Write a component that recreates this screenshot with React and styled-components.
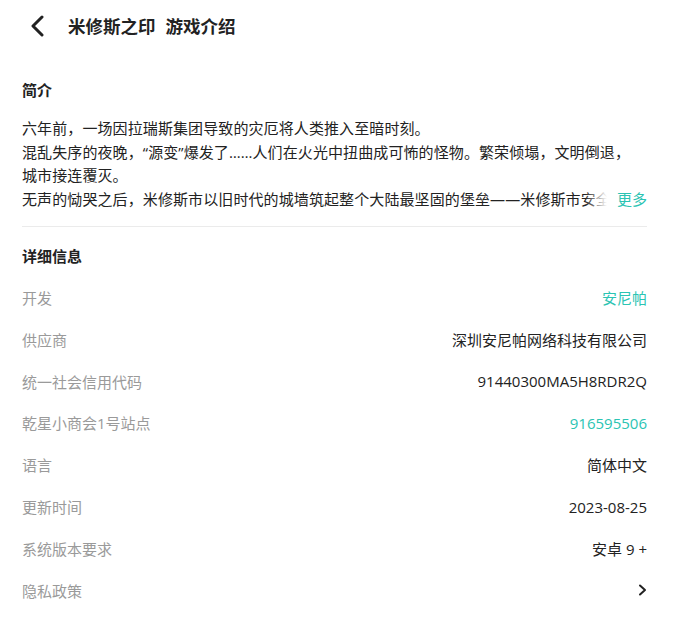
import React from "react";
import styled, { createGlobalStyle } from "styled-components";

const Global = createGlobalStyle`
  html, body { margin: 0; padding: 0; background: #fff; }
  body {
    font-family: "Open Sans", "Noto Sans CJK SC", sans-serif;
    color: #222;
    -webkit-font-smoothing: antialiased;
  }
  * { box-sizing: border-box; }
`;

const Page = styled.div`
  width: 681px;
  min-height: 621px;
  background: #fff;
`;

const Header = styled.header`
  height: 52px;
  display: flex;
  align-items: center;
  padding-left: 27px;
`;

const BackButton = styled.button`
  width: 20px;
  height: 24px;
  padding: 0;
  border: 0;
  background: none;
  display: flex;
  align-items: center;
  justify-content: center;
  margin-right: 21px;
  cursor: pointer;
`;

const Title = styled.h1`
  margin: 0 0 1px;
  display: flex;
  gap: 10px;
  font-size: 17.5px;
  font-weight: 700;
  color: #222;
  line-height: 24px;
`;

const Content = styled.main`
  padding: 0 34px 0 22px;
`;

const SectionTitle = styled.h2`
  margin: ${(p) => p.$mt} 0 0;
  font-size: 15px;
  line-height: 24px;
  font-weight: 700;
  color: #222;
`;

const IntroWrap = styled.div`
  position: relative;
  margin-top: 15px;
  max-height: calc(23.6px * 4);
  overflow: hidden;
`;

const IntroText = styled.p`
  margin: 0;
  font-size: 15px;
  line-height: 23.6px;
  color: #222;
  white-space: pre-line;
  letter-spacing: 0.1px;
`;

const MoreButton = styled.button`
  position: absolute;
  right: 0;
  top: calc(23.6px * 3);
  height: 23.6px;
  padding: 0 0 0 32px;
  border: 0;
  font: inherit;
  font-size: 15px;
  line-height: 23.6px;
  color: #2bc4b3;
  background: linear-gradient(90deg, rgba(255, 255, 255, 0) 0, #fff 22px);
  cursor: pointer;
`;

const Divider = styled.hr`
  margin: 15px 0 0;
  border: 0;
  height: 1px;
  background: #ebebeb;
`;

const InfoList = styled.dl`
  margin: 8px 0 0;
  padding: 0;
`;

const Row = styled.div`
  height: 41.85px;
  display: flex;
  align-items: center;
  justify-content: space-between;
  font-size: 15px;
`;

const Label = styled.dt`
  color: #9a9a9a;
`;

const Value = styled.dd`
  margin: 0;
  color: ${(p) => (p.$link ? "#2bc4b3" : "#222")};
  display: flex;
  align-items: center;
`;

const Chevron = ({ d, w, h, sw }) => (
  <svg width={w} height={h} viewBox={`0 0 ${w} ${h}`} fill="none">
    <path d={d} stroke="#222" strokeWidth={sw} strokeLinecap="round" strokeLinejoin="round" />
  </svg>
);

const intro =
  "六年前，一场因拉瑞斯集团导致的灾厄将人类推入至暗时刻。\n" +
  "混乱失序的夜晚，“源变”爆发了……人们在火光中扭曲成可怖的怪物。繁荣倾塌，文明倒退，\n城市接连覆灭。\n" +
  "无声的恸哭之后，米修斯市以旧时代的城墙筑起整个大陆最坚固的堡垒——米修斯市安全区，成为人类最后的希望。\n" +
  "而你，将作为指挥官，带领伙伴们守护这座城市。";

const rows = [
  { label: "开发", value: "安尼帕", link: true },
  { label: "供应商", value: "深圳安尼帕网络科技有限公司" },
  { label: "统一社会信用代码", value: "91440300MA5H8RDR2Q" },
  { label: "乾星小商会1号站点", value: "916595506", link: true },
  { label: "语言", value: "简体中文" },
  { label: "更新时间", value: "2023-08-25" },
  { label: "系统版本要求", value: "安卓 9 +" },
  { label: "隐私政策", chevron: true },
];

export default function App() {
  return (
    <Page>
      <Global />
      <Header>
        <BackButton aria-label="返回">
          <Chevron d="M13 2 L4 11 L13 20" w={16} h={22} sw={3} />
        </BackButton>
        <Title>
          <span>米修斯之印</span>
          <span>游戏介绍</span>
        </Title>
      </Header>
      <Content>
        <SectionTitle $mt="26px">简介</SectionTitle>
        <IntroWrap>
          <IntroText>{intro}</IntroText>
          <MoreButton>更多</MoreButton>
        </IntroWrap>
        <Divider />
        <SectionTitle $mt="17px">详细信息</SectionTitle>
        <InfoList>
          {rows.map((r) => (
            <Row key={r.label}>
              <Label>{r.label}</Label>
              <Value $link={r.link}>
                {r.chevron ? (
                  <Chevron d="M2 1.5 L7 6 L2 10.5" w={9} h={12} sw={2} />
                ) : (
                  r.value
                )}
              </Value>
            </Row>
          ))}
        </InfoList>
      </Content>
    </Page>
  );
}
